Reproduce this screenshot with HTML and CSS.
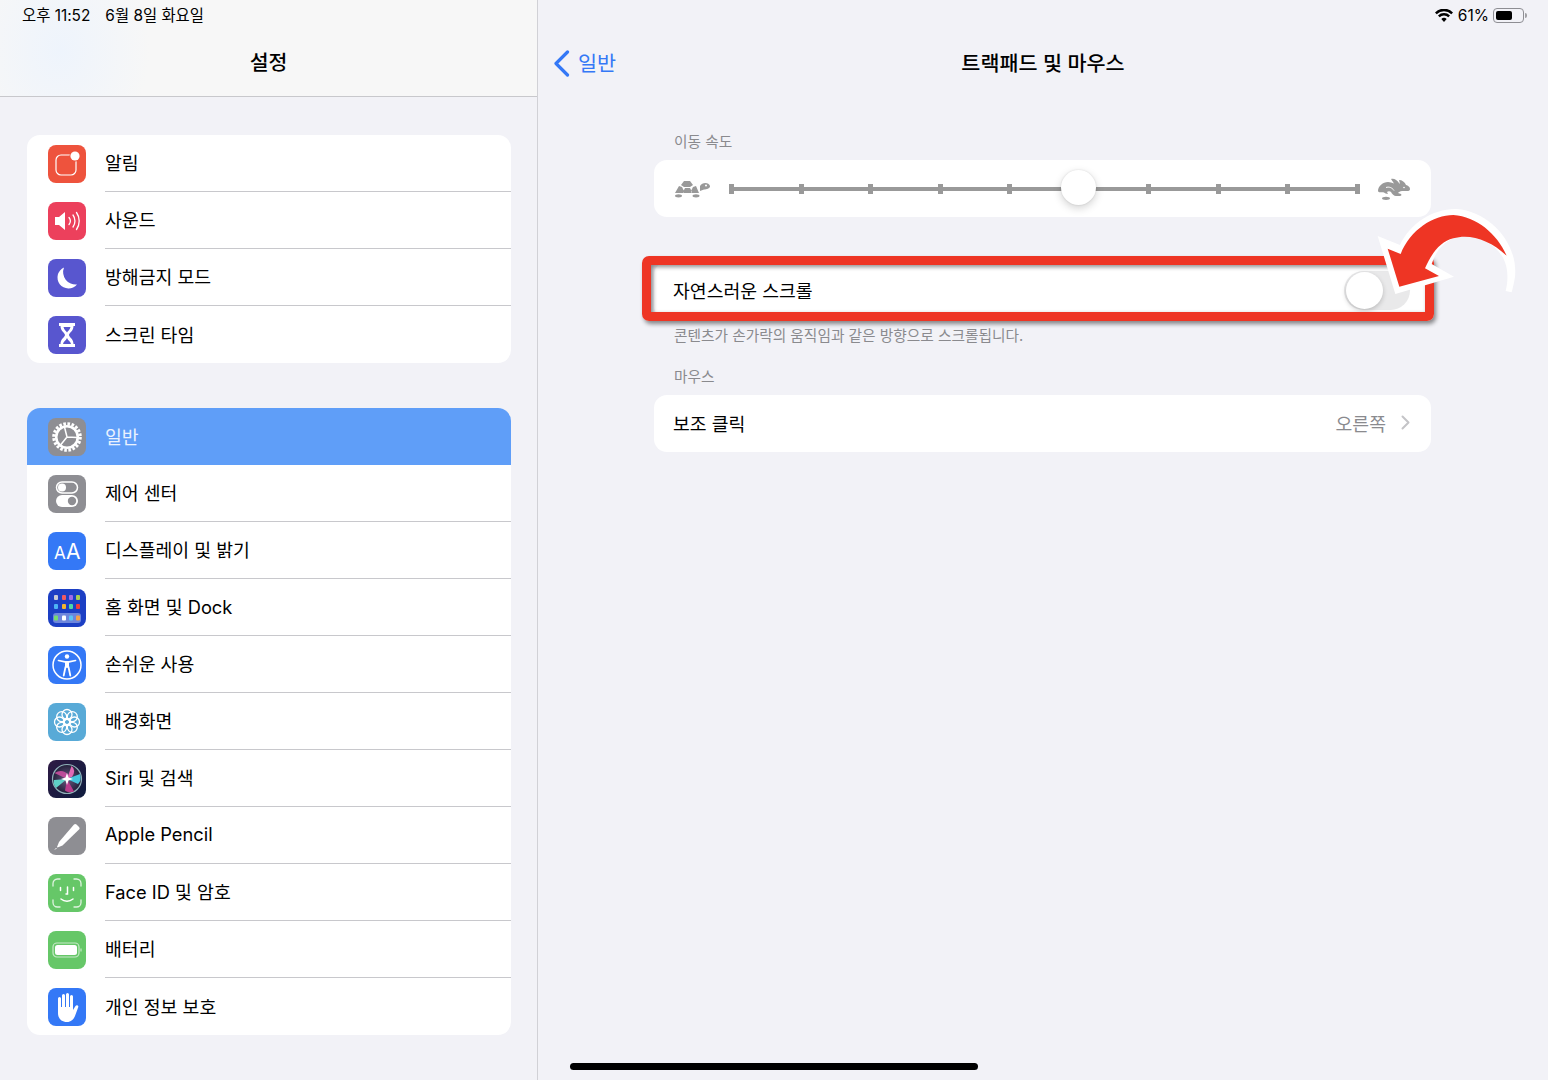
FILE: index.html
```html
<!DOCTYPE html>
<html lang="ko">
<head>
<meta charset="utf-8">
<title>트랙패드 및 마우스</title>
<link rel="stylesheet" href="styles.css">
</head>
<body>
<div class="screen">
  <aside class="sidebar">
    <header class="side-head">
      <div class="status-left"><span>오후 11:52</span><span>6월 8일 화요일</span></div>
      <h1 class="side-title">설정</h1>
    </header>
    <ul class="group">
      <li class="row">
        <svg class="icon" viewBox="0 0 38 38"><rect width="38" height="38" rx="8" fill="#ee533d"/><rect x="8" y="10" width="20" height="20" rx="5" fill="none" stroke="#fff" stroke-width="1.2"/><circle cx="27" cy="11" r="5.5" fill="#ee533d"/><circle cx="27" cy="11" r="4.6" fill="#fff"/></svg>
        <div class="row-body">알림</div>
      </li>
      <li class="row">
        <svg class="icon" viewBox="0 0 38 38"><rect width="38" height="38" rx="8" fill="#ec405c"/><path d="M7 15h4l6-5v18l-6-5H7z" fill="#fff"/><path d="M21 15.500c1.600 2 1.600 5 0 7M25 13c2.600 3.500 2.600 8.500 0 12M28.500 10.500c3.600 5 3.600 12 0 17" fill="none" stroke="#fff" stroke-width="1.300" stroke-linecap="round"/></svg>
        <div class="row-body">사운드</div>
      </li>
      <li class="row">
        <svg class="icon" viewBox="0 0 38 38"><rect width="38" height="38" rx="8" fill="#5856cf"/><path d="M16 8.500A11 11 0 1 0 29 25.500 12.500 12.500 0 0 1 16 8.500z" fill="#fff"/></svg>
        <div class="row-body">방해금지 모드</div>
      </li>
      <li class="row">
        <svg class="icon" viewBox="0 0 38 38"><rect width="38" height="38" rx="8" fill="#5856cf"/><path d="M11 7h16v3h-1.500c0 5-4 6.500-4.500 9 .5 2.500 4.500 4 4.500 9H27v3H11v-3h1.500c0-5 4-6.500 4.500-9-.5-2.500-4.500-4-4.500-9H11z" fill="#fff"/><path d="M15.500 11h7c-.5 2.500-2.500 4-3.500 5.500-1-1.500-3-3-3.500-5.500zM15 28c.5-2.500 3-3.500 4-6 1 2.500 3.500 3.500 4 6z" fill="#5856cf"/></svg>
        <div class="row-body">스크린 타임</div>
      </li>
    </ul>
    <ul class="group group-second">
      <li class="row row-selected">
        <svg class="icon" viewBox="0 0 38 38"><rect width="38" height="38" rx="8" fill="#8e8e93"/><circle cx="19" cy="19" r="13.200" fill="none" stroke="#fff" stroke-width="3.200" stroke-dasharray="2.600 1.550"/><circle cx="19" cy="19" r="10.800" fill="none" stroke="#fff" stroke-width="2.600"/><path d="M19 19L16.500 9M19 19L29 19.500M19 19L12.500 27" stroke="#fff" stroke-width="1.500" fill="none"/></svg>
        <div class="row-body">일반</div>
      </li>
      <li class="row">
        <svg class="icon" viewBox="0 0 38 38"><rect width="38" height="38" rx="8" fill="#8e8e93"/><rect x="8.500" y="7" width="21" height="11" rx="5.500" fill="none" stroke="#fff" stroke-width="1.500"/><circle cx="14" cy="12.500" r="4" fill="#fff"/><rect x="8" y="20" width="22" height="12" rx="6" fill="#fff"/><circle cx="24" cy="26" r="4.200" fill="#8e8e93"/></svg>
        <div class="row-body">제어 센터</div>
      </li>
      <li class="row">
        <svg class="icon" viewBox="0 0 38 38"><rect width="38" height="38" rx="8" fill="#3478f6"/><text class="aa-small" x="6" y="27">A</text><text class="aa-big" x="18" y="27">A</text></svg>
        <div class="row-body">디스플레이 및 밝기</div>
      </li>
      <li class="row">
        <svg class="icon" viewBox="0 0 38 38"><rect width="38" height="38" rx="8" fill="#1c3fc4"/><rect x="5" y="24" width="28" height="10" rx="3" fill="#6d86dc"/>
          <rect x="6" y="6" width="4" height="5" rx="1" fill="#c9ccd6"/><rect x="14" y="6" width="4" height="5" rx="1" fill="#ef5a63"/><rect x="21" y="6" width="4" height="5" rx="1" fill="#a06be8"/><rect x="28" y="6" width="4" height="5" rx="1" fill="#a9cf53"/>
          <rect x="6" y="15" width="4" height="5" rx="1" fill="#4db3f5"/><rect x="14" y="15" width="4" height="5" rx="1" fill="#f5b52e"/><rect x="21" y="15" width="4" height="5" rx="1" fill="#4fd6a5"/><rect x="28" y="15" width="4" height="5" rx="1" fill="#ef3b3b"/>
          <rect x="6" y="26.500" width="4" height="5" rx="1" fill="#78dc6e"/><rect x="14" y="26.500" width="4" height="5" rx="1" fill="#fff"/><rect x="21" y="26.500" width="4" height="5" rx="1" fill="#5cc4f5"/><rect x="28" y="26.500" width="4" height="5" rx="1" fill="#f5a14a"/></svg>
        <div class="row-body">홈 화면 및 Dock</div>
      </li>
      <li class="row">
        <svg class="icon" viewBox="0 0 38 38"><rect width="38" height="38" rx="8" fill="#3478f6"/><circle cx="19" cy="19" r="14" fill="none" stroke="#fff" stroke-width="1.500"/><circle cx="19" cy="10.500" r="2.200" fill="#fff"/><path d="M10.500 14.500l6.500 1.300h4l6.500-1.300" fill="none" stroke="#fff" stroke-width="1.700" stroke-linecap="round" stroke-linejoin="round"/><path d="M17 15.800h4v6h-4z" fill="#fff"/><path d="M17.500 21l-1.800 8.500M20.500 21l1.800 8.500" fill="none" stroke="#fff" stroke-width="1.800" stroke-linecap="round"/></svg>
        <div class="row-body">손쉬운 사용</div>
      </li>
      <li class="row">
        <svg class="icon" viewBox="0 0 38 38"><rect width="38" height="38" rx="8" fill="#58aad7"/><g fill="none" stroke="#fff" stroke-width="1.300"><circle cx="19" cy="11.500" r="5"/><circle cx="19" cy="26.500" r="5"/><circle cx="11.500" cy="19" r="5"/><circle cx="26.500" cy="19" r="5"/><circle cx="13.700" cy="13.700" r="5"/><circle cx="24.300" cy="13.700" r="5"/><circle cx="13.700" cy="24.300" r="5"/><circle cx="24.300" cy="24.300" r="5"/><circle cx="19" cy="19" r="3.500"/></g></svg>
        <div class="row-body">배경화면</div>
      </li>
      <li class="row">
        <svg class="icon" viewBox="0 0 38 38"><defs><linearGradient id="siriBg" x1="0" y1="0" x2="1" y2="1"><stop offset="0" stop-color="#2e1a44"/><stop offset="1" stop-color="#0e1c3e"/></linearGradient><radialGradient id="siriOrb" cx=".5" cy=".5" r=".5"><stop offset="0" stop-color="#6a5a80"/><stop offset="1" stop-color="#221f3a"/></radialGradient></defs><rect width="38" height="38" rx="8" fill="url(#siriBg)"/><circle cx="19" cy="19" r="14.500" fill="url(#siriOrb)" stroke="#8fb0b8" stroke-width="1.200"/><path d="M19 19L6.500 13q8-5 14 2z" fill="#c94fa0" opacity=".9"/><path d="M19 19L23.500 6q5 4 .5 11z" fill="#e06ab5"/><path d="M19 19L32 14q2 6-2 10z" fill="#45c6dc"/><path d="M19 19L26 31.500q-6 2-9-1z" fill="#b83c8c"/><path d="M19 19L8 28q-3-4-2-8z" fill="#5fd0c8"/><path d="M19 13l1.500 4.500L25 19l-4.500 1.500L19 25l-1.500-4.500L13 19l4.500-1.500z" fill="#fff"/></svg>
        <div class="row-body">Siri 및 검색</div>
      </li>
      <li class="row">
        <svg class="icon" viewBox="0 0 38 38"><rect width="38" height="38" rx="8" fill="#8e8e93"/><path d="M28.500 7.500l2.500 2.500c.8.800.8 1.800 0 2.600L14.500 28.500 9.500 30.500l-.5-.5 2-5L26 7.500c.8-.7 1.700-.7 2.500 0z" fill="#fff"/><path d="M7 32.500l1.500-1.500" stroke="#fff" stroke-width="1"/></svg>
        <div class="row-body">Apple Pencil</div>
      </li>
      <li class="row">
        <svg class="icon" viewBox="0 0 38 38"><rect width="38" height="38" rx="8" fill="#66c768"/><path d="M5 12V9.500A4.500 4.500 0 0 1 9.500 5H12M26 5h2.500A4.500 4.500 0 0 1 33 9.500V12M33 26v2.500a4.500 4.500 0 0 1-4.500 4.500H26M12 33H9.500A4.500 4.500 0 0 1 5 28.500V26" fill="none" stroke="#dff3df" stroke-width="1.300" stroke-linecap="round"/><path d="M12.500 13.500v3M25.500 13.500v3M19.500 13v7h-1.500M13 25c3.500 3 8.500 3 12 0" fill="none" stroke="#fff" stroke-width="1.500" stroke-linecap="round"/></svg>
        <div class="row-body">Face ID 및 암호</div>
      </li>
      <li class="row">
        <svg class="icon" viewBox="0 0 38 38"><rect width="38" height="38" rx="8" fill="#66c768"/><rect x="5" y="12" width="26" height="14" rx="4" fill="none" stroke="#c6eac7" stroke-width="1.200"/><rect x="7" y="14" width="22" height="10" rx="2.500" fill="#fff"/><path d="M33 17.500v3" stroke="#c6eac7" stroke-width="1.200"/></svg>
        <div class="row-body">배터리</div>
      </li>
      <li class="row">
        <svg class="icon" viewBox="0 0 38 38"><rect width="38" height="38" rx="8" fill="#3478f6"/><path d="M10 10.500a1.500 1.500 0 0 1 3 0V19h1V7.500a1.500 1.500 0 0 1 3 0V19h1V6.500a1.500 1.500 0 0 1 3 0V19h1V8.500a1.500 1.500 0 0 1 3 0V22l2.500-4c1-1.600 3.500-.5 2.700 1.300L27 28c-1.500 3.500-4 6-8 6-5.500 0-9-3.500-9-9z" fill="#fff"/></svg>
        <div class="row-body">개인 정보 보호</div>
      </li>
    </ul>
  </aside>

  <main class="detail">
    <header class="detail-head">
      <div class="status-right">
        <svg class="wifi" viewBox="0 0 18 13"><path d="M9 13L6.300 10a3.800 3.800 0 0 1 5.400 0zM4.700 8.300L3 6.500a8.500 8.500 0 0 1 12 0l-1.700 1.800a6 6 0 0 0-8.600 0zM1.700 5.200L0 3.400a12.700 12.700 0 0 1 18 0l-1.700 1.800a10.300 10.300 0 0 0-14.600 0z" fill="#000"/></svg>
        <span>61%</span>
        <span class="battery"><span class="battery-fill"></span></span>
        <span class="battery-nub"></span>
      </div>
      <nav class="nav">
        <a class="back">
          <svg class="chevron-back" viewBox="0 0 17 27"><path d="M14.500 2L3 13.500 14.500 25" fill="none" stroke="#3478f6" stroke-width="3.200" stroke-linecap="round" stroke-linejoin="round"/></svg>
          <span>일반</span>
        </a>
        <h2 class="detail-title">트랙패드 및 마우스</h2>
      </nav>
    </header>

    <section class="content">
      <p class="label">이동 속도</p>
      <div class="card slider-card">
        <svg class="turtle" viewBox="0 0 36 18"><path d="M10 1h6l3 4-3 2h-6L7 5zM5 6l3 1 2 4-1 2H1zM22 6l-3 1-2 4 1 2h7zM11 8h5l2 4-1 1H10l-1-1z" fill="#999"/><path d="M26 6c2-4 9-4 10 0 .3 2-3 3.500-6 3.500L26 11z" fill="#999"/><circle cx="32" cy="5.500" r="1" fill="#fff"/><ellipse cx="4.500" cy="15.800" rx="3.500" ry="1.600" fill="#999"/><ellipse cx="22" cy="15.800" rx="3.500" ry="1.600" fill="#999"/></svg>
        <div class="track">
          <i></i><i></i><i></i><i></i><i></i><i></i><i></i><i></i><i></i><i></i>
          <span class="thumb"></span>
        </div>
        <svg class="rabbit" viewBox="0 0 33 22"><path d="M1 13C1 8 6 4 11 4c2 0 4 .5 6 1.500L14 1c3-1 6 1 8 4l1 1-1-4c3 0 6 2 7 5 2 .5 4 2 4 4 0 1.500-1 2-3 2h-5c-2 0-3 1-4 2l3 1c1 1 0 2-1 2h-4c-2 0-4-2-5-4-1-1-3-1-4 0l1 2c-2 0-3-1-4-1.500S1 15 1 13z" fill="#999"/><ellipse cx="9" cy="20.300" rx="4" ry="1.600" fill="#999"/><path d="M9 9.500c3-1 6 0 8 3" fill="none" stroke="#fff" stroke-width="1"/><circle cx="27" cy="9.500" r=".8" fill="#fff"/></svg>
      </div>

      <div class="card toggle-card">
        <span>자연스러운 스크롤</span>
        <span class="switch"><span class="knob"></span></span>
      </div>
      <p class="note">콘텐츠가 손가락의 움직임과 같은 방향으로 스크롤됩니다.</p>

      <p class="label label-mouse">마우스</p>
      <div class="card link-card">
        <span>보조 클릭</span>
        <span class="value">오른쪽
          <svg class="chevron" viewBox="0 0 9 15"><path d="M1.500 1.500l6 6-6 6" fill="none" stroke="#c4c4c7" stroke-width="2" stroke-linecap="round" stroke-linejoin="round"/></svg>
        </span>
      </div>
    </section>
  </main>

  <div class="frame"></div>
  <svg class="arrow" viewBox="0 0 774 450"><path d="M263 138L330 165C360 100 430 55 500 57C600 65 685 160 675 260C672 280 668 295 665 307L647 303C655 270 655 235 640 205C610 150 540 125 490 145C455 160 435 190 425 222L492 260L316 312Z" fill="#fff"/><path d="M293 176L332 192C360 120 430 75 490 75C560 80 620 130 650 197C600 150 540 130 490 145C450 155 425 190 405 235L447 258L328 290Z" fill="#ee3524"/></svg>
  <div class="home-bar"></div>
</div>
</body>
</html>
```

FILE: styles.css
```css
* { box-sizing: border-box; }

html, body {
  margin: 0;
  padding: 0;
  overflow: hidden;
}

body {
  font-family: Inter, "Noto Sans CJK KR", sans-serif;
  color: #000;
  background: #f2f2f7;
}

.screen {
  position: relative;
  display: flex;
  width: 1548px;
  height: 1080px;
  overflow: hidden;
  background: #f2f2f7;
}

/* sidebar */
.sidebar {
  width: 538px;
  flex: none;
  border-right: 1px solid #d1d1d6;
}

.side-head {
  height: 97px;
  border-bottom: 1px solid #c8c8cc;
  background:
    radial-gradient(ellipse 90px 110px at 60px 50px, #eef4fc 0%, rgba(238, 244, 252, 0) 100%),
    #f7f7f7;
}

.status-left {
  display: flex;
  gap: 15px;
  height: 28px;
  padding-left: 22px;
  align-items: center;
  font-size: 15.4px;
}

.side-title {
  margin: 0;
  height: 68px;
  line-height: 70px;
  text-align: center;
  font-size: 20.5px;
  font-weight: 500;
}

.group {
  list-style: none;
  margin: 38px 26px 0 27px;
  padding: 0;
  background: #fff;
  border-radius: 13px;
  overflow: hidden;
}

.group-second {
  margin-top: 45px;
}

.row {
  display: flex;
  align-items: center;
  gap: 19px;
  height: 57px;
  padding-left: 21px;
  font-size: 18.3px;
}

.icon {
  width: 38px;
  height: 38px;
  flex: none;
}

.row-body {
  flex: 1;
  height: 100%;
  display: flex;
  align-items: center;
  padding-bottom: 2px;
  border-bottom: 1px solid #c8c8cc;
}

.row:last-child .row-body,
.row-selected .row-body {
  border-bottom: 0;
}

.row-selected {
  background: #5f9ef8;
  color: #eaf2fe;
}

.aa-small {
  font-family: Inter, sans-serif;
  font-size: 17px;
  fill: #fff;
}

.aa-big {
  font-family: Inter, sans-serif;
  font-size: 21px;
  fill: #fff;
}

/* detail */
.detail {
  flex: 1;
  min-width: 0;
}

.detail-head {
  height: 97px;
}

.status-right {
  display: flex;
  justify-content: flex-end;
  align-items: center;
  height: 30px;
  padding-right: 21px;
  font-size: 15.5px;
}

.wifi {
  width: 18px;
  height: 13px;
  margin-right: 5px;
}

.battery {
  display: block;
  width: 31px;
  height: 15px;
  margin-left: 4px;
  padding: 2px;
  border: 1px solid #8e8e93;
  border-radius: 4px;
}

.battery-fill {
  display: block;
  width: 16px;
  height: 100%;
  background: #000;
  border-radius: 2px;
}

.battery-nub {
  display: block;
  width: 2px;
  height: 5px;
  margin-left: 1px;
  background: #a0a0a4;
  border-radius: 0 2px 2px 0;
}

.nav {
  display: grid;
  grid-template-columns: 1fr auto 1fr;
  align-items: center;
  height: 64px;
}

.back {
  display: flex;
  align-items: center;
  gap: 8px;
  padding-left: 15px;
  color: #3478f6;
  font-size: 20.7px;
}

.chevron-back {
  width: 17px;
  height: 27px;
  margin-top: 2px;
}

.detail-title {
  grid-column: 2;
  margin: 0;
  font-size: 20.7px;
  font-weight: 500;
}

.content {
  padding: 35px 117px 0 116px;
}

.label,
.note {
  margin: 0;
  height: 20px;
  line-height: 20px;
  padding-left: 20px;
  font-size: 14.7px;
  color: #8a8a8e;
}

.label {
  margin-bottom: 8px;
}

.label-mouse {
  margin-top: 21px;
}

.note {
  margin-top: 7px;
}

.card {
  display: flex;
  align-items: center;
  height: 57px;
  background: #fff;
  border-radius: 13px;
  font-size: 18.3px;
}

.slider-card {
  padding: 0 21px 0 20px;
}

.turtle {
  width: 36px;
  height: 18px;
  margin-right: 19px;
  flex: none;
}

.rabbit {
  width: 33px;
  height: 22px;
  margin-left: 17px;
  flex: none;
}

.track {
  position: relative;
  flex: 1;
  height: 10px;
  display: flex;
  justify-content: space-between;
  align-items: center;
  background: linear-gradient(#999, #999) center / 100% 4px no-repeat;
}

.track i {
  display: block;
  width: 5px;
  height: 10px;
  background: #999;
}

.thumb {
  position: absolute;
  top: -13.500px;
  left: 332px;
  width: 35px;
  height: 35px;
  border-radius: 50%;
  background: #fff;
  box-shadow: 0 3px 9px rgba(0, 0, 0, 0.18), 0 0 2px rgba(0, 0, 0, 0.12);
}

.toggle-card {
  justify-content: space-between;
  margin-top: 45px;
  padding: 0 21px 0 19px;
}

.toggle-card > span:first-child,
.link-card > span {
  padding-bottom: 2px;
}

.switch {
  display: block;
  width: 66px;
  height: 39px;
  padding: 1px 2px;
  border-radius: 20px;
  background: #e9e9ea;
}

.knob {
  display: block;
  width: 37px;
  height: 37px;
  border-radius: 50%;
  background: #fff;
  box-shadow: 0 2px 5px rgba(0, 0, 0, 0.2);
}

.link-card {
  justify-content: space-between;
  padding: 0 21px 0 19px;
}

.value {
  display: flex;
  align-items: center;
  gap: 15px;
  color: #8a8a8e;
}

.chevron {
  width: 9px;
  height: 15px;
}

/* annotation overlays */
.frame {
  position: absolute;
  left: 642px;
  top: 256px;
  width: 792px;
  height: 65px;
  border: 9px solid #ee3524;
  border-radius: 7px;
  box-shadow: 2px 3px 4px rgba(0, 0, 0, 0.45), inset 2px 2px 4px rgba(0, 0, 0, 0.45);
}

.arrow {
  position: absolute;
  left: 1290px;
  top: 190px;
  width: 258px;
  height: 150px;
}

.home-bar {
  position: absolute;
  left: 570px;
  top: 1063px;
  width: 408px;
  height: 7px;
  border-radius: 4px;
  background: #000;
}
```
